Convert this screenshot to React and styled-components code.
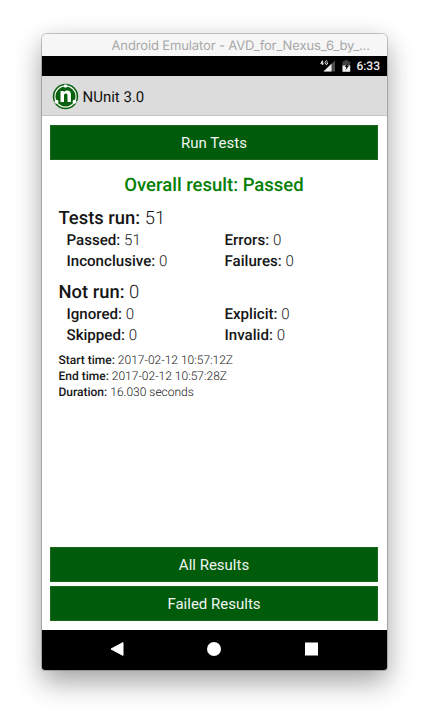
import React from 'react';
import styled, { createGlobalStyle } from 'styled-components';

const GlobalStyle = createGlobalStyle`
  * { box-sizing: border-box; }
  body { margin: 0; background: #fff; overflow: hidden; }
`;

const Desktop = styled.main`
  width: 429px;
  height: 720px;
  padding: 34px 42px 50px;
  font-family: Roboto, sans-serif;
  background: #fff;
  text-rendering: geometricPrecision;
`;

const Window = styled.section`
  width: 345px;
  height: 636px;
  display: flex;
  flex-direction: column;
  overflow: hidden;
  border-radius: 5px 5px 3px 3px;
  background: #fff;
  box-shadow: 0 0 0 1px rgba(0, 0, 0, 0.2), 0 13px 28px rgba(0, 0, 0, 0.32), 0 2px 24px rgba(0, 0, 0, 0.08);
`;

const TitleBar = styled.header`
  height: 22px;
  flex: none;
  padding-left: 69.5px;
  font: 400 13px/24px Inter, sans-serif;
  letter-spacing: -0.13px;
  color: #a8a8a8;
  background: #f6f6f6;
  white-space: nowrap;
`;

const StatusBar = styled.div`
  height: 20px;
  flex: none;
  display: flex;
  align-items: center;
  justify-content: flex-end;
  padding-right: 7px;
  background: #000;
  color: #eee;
`;

const Clock = styled.span`
  margin-left: 4px;
  font-size: 12px;
  font-weight: 500;
  line-height: 20px;
`;

const AppBar = styled.div`
  height: 40px;
  flex: none;
  display: flex;
  align-items: center;
  padding: 1px 0 0 10px;
  gap: 3.5px;
  background: #dcdcdc;
  border-bottom: 1px solid #c4c4c4;
`;

const AppName = styled.h1`
  margin: 1px 0 0;
  font-size: 15px;
  font-weight: 400;
  line-height: 20px;
  color: #111;
`;

const Content = styled.div`
  flex: 1;
  display: flex;
  flex-direction: column;
  padding: 9px 9px 9px 8px;
  color: #161616;
`;

const ActionButton = styled.button`
  height: 35px;
  flex: none;
  padding: 1px 0 0;
  border: 1px solid #1c671c;
  background: #005c0a;
  color: #f2f5f2;
  font: 400 15px/32px Roboto, sans-serif;
`;

const Overall = styled.h2`
  margin: 14px 0 0;
  font-size: 18.5px;
  font-weight: 550;
  line-height: 22px;
  text-align: center;
  color: #058005;
`;

const Group = styled.section`
  padding-left: 8.5px;
  margin-top: ${(p) => p.$gap}px;
`;

const Total = styled.div`
  font-size: 18.4px;
  line-height: 23px;
`;

const Counts = styled.div`
  display: grid;
  grid-template-columns: 158px 1fr;
  padding-left: 8px;
  font-size: 15.1px;
  line-height: 20.5px;
`;

const Times = styled.div`
  padding-left: 8.5px;
  margin-top: 7px;
  font-size: 12px;
  line-height: 16px;
`;

const Label = styled.span`
  font-weight: 550;
`;

const Value = styled.span`
  font-weight: 300;
`;

const Footer = styled.div`
  display: flex;
  flex-direction: column;
  gap: 4px;
  margin-top: auto;
`;

const NavBar = styled.nav`
  height: 40px;
  flex: none;
  display: flex;
  align-items: center;
  justify-content: space-between;
  padding: 0 67px 2px 66px;
  background: #000;
`;

const Stat = ({ label, value }) => (
  <div><Label>{label}:</Label> <Value>{value}</Value></div>
);

const Logo = () => (
  <svg width="27" height="27" viewBox="0 0 27 27">
    <circle cx="13.5" cy="13.5" r="12.7" fill="#07610d" />
    <circle cx="13.5" cy="13.5" r="10.6" fill="none" stroke="#eef3ee" strokeWidth="1.1" />
    <circle cx="13.5" cy="3" r="1.7" fill="#fff" />
    <circle cx="4.5" cy="18.8" r="2" fill="#fff" />
    <circle cx="22.5" cy="18.8" r="2" fill="#fff" />
    <path d="M8.5 8h3.2v1.2c1-1.1 2.2-1.6 3.5-1.6 2.4 0 3.7 1.5 3.7 4.1V19h-3.4v-6.7c0-1.3-.5-1.9-1.6-1.9-1.2 0-1.9.8-1.9 2.1V19H8.5z" fill="#fff" />
  </svg>
);

const StatusIcons = () => (
  <svg width="33" height="16" viewBox="0 0 33 16">
    <path d="M16 2.5v11H4.5z" fill="#4c4c4c" />
    <path d="M12.5 5.8v7.7H4.5z" fill="#eee" />
    <path d="M3.5 2.5 1.8 5.7h2.5M3.7 3v4M8.5 3.3C7.8 2.4 6.1 2.6 6.1 4.7s1.8 2.3 2.4 1.3V4.8h-1" fill="none" stroke="#eee" strokeWidth="1" />
    <path d="M23.5 3.5h2V2.3h3.4v1.2h2.3v10h-7.7z" fill="#444" />
    <path d="M23.5 7.5h7.7v6.2h-7.7z" fill="#eee" />
    <path d="m29 5-3.2 4h1.6l-1 3.2 3.6-4.4h-1.8z" fill="#000" />
  </svg>
);

export default function App() {
  return (
    <>
      <GlobalStyle />
      <Desktop>
        <Window>
          <TitleBar>Android Emulator - AVD_for_Nexus_6_by_...</TitleBar>
          <StatusBar><StatusIcons /><Clock>6:33</Clock></StatusBar>
          <AppBar><Logo /><AppName>NUnit 3.0</AppName></AppBar>
          <Content>
            <ActionButton>Run Tests</ActionButton>
            <Overall>Overall result: Passed</Overall>
            <Group $gap={11}>
              <Total><Label>Tests run:</Label> <Value>51</Value></Total>
              <Counts>
                <Stat label="Passed" value="51" />
                <Stat label="Errors" value="0" />
                <Stat label="Inconclusive" value="0" />
                <Stat label="Failures" value="0" />
              </Counts>
            </Group>
            <Group $gap={10}>
              <Total><Label>Not run:</Label> <Value>0</Value></Total>
              <Counts>
                <Stat label="Ignored" value="0" />
                <Stat label="Explicit" value="0" />
                <Stat label="Skipped" value="0" />
                <Stat label="Invalid" value="0" />
              </Counts>
            </Group>
            <Times>
              <Stat label="Start time" value="2017-02-12 10:57:12Z" />
              <Stat label="End time" value="2017-02-12 10:57:28Z" />
              <Stat label="Duration" value="16.030 seconds" />
            </Times>
            <Footer>
              <ActionButton>All Results</ActionButton>
              <ActionButton>Failed Results</ActionButton>
            </Footer>
          </Content>
          <NavBar>
            <svg width="17" height="16" viewBox="0 0 17 16"><path d="M15 1.6v12.8L3 8z" fill="#fff" stroke="#fff" strokeLinejoin="round" /></svg>
            <svg width="16" height="16" viewBox="0 0 16 16"><circle cx="8" cy="8" r="7" fill="#fff" /></svg>
            <svg width="17" height="16" viewBox="0 0 17 16"><path d="M2 1.5h13v13H2z" fill="#fff" /></svg>
          </NavBar>
        </Window>
      </Desktop>
    </>
  );
}
